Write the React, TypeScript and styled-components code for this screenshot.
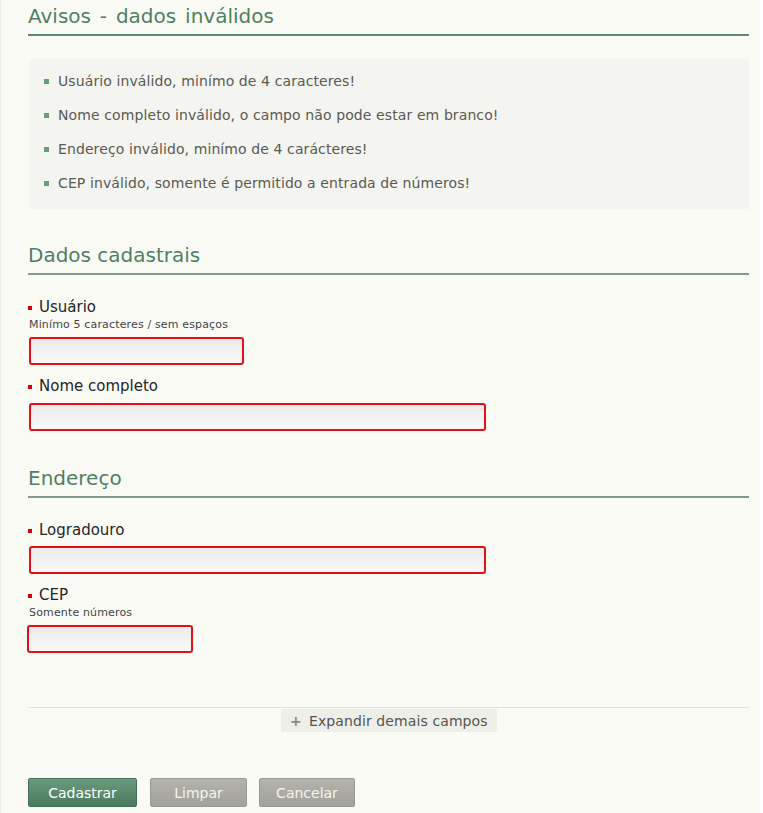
import React from "react";
import styled, { createGlobalStyle } from "styled-components";

const Global = createGlobalStyle`
  html, body { margin: 0; padding: 0; background: #ffffff; }
  body { font-family: "DejaVu Sans", Verdana, sans-serif; }
`;

const Page = styled.div`
  width: 760px;
  min-height: 813px;
  box-sizing: border-box;
  background: #fbfbf6;
  border-left: 1px solid #ecece6;
  padding: 4px 11px 6px 27px;
`;

const Heading = styled.h2<{ $strong?: boolean; $top: number }>`
  margin: ${(p) => p.$top}px 0 0 0;
  font-size: 20px;
  line-height: 24px;
  font-weight: normal;
  color: #4f7f63;
  word-spacing: ${(p) => (p.$strong ? "2.5px" : "0")};
  padding-bottom: 6px;
  border-bottom: 2px solid ${(p) => (p.$strong ? "#5f8b6d" : "#7f9e8a")};
`;

const WarnBox = styled.ul`
  list-style: none;
  margin: 23px 0 0 2px;
  padding: 5px 0 9px 14px;
  background: #f4f4f1;
`;

const WarnItem = styled.li`
  display: flex;
  align-items: center;
  height: 34px;
  font-size: 14px;
  letter-spacing: 0.1px;
  color: #5a5a52;
`;

const Bullet = styled.span`
  width: 5px;
  height: 5px;
  background: #6b9a78;
  margin-right: 9px;
  flex: none;
`;

const Field = styled.div<{ $top: number }>`
  display: flex;
  flex-direction: column;
  align-items: flex-start;
  margin-top: ${(p) => p.$top}px;
`;

const Label = styled.label`
  display: flex;
  align-items: center;
  font-size: 15px;
  line-height: 18px;
  color: #252525;
  margin-left: 1px;
`;

const Mark = styled.span`
  width: 4px;
  height: 4px;
  background: #dd0000;
  margin-right: 7px;
  margin-top: 2px;
  margin-left: -1px;
`;

const Hint = styled.div`
  font-size: 11px;
  line-height: 14px;
  letter-spacing: 0.15px;
  color: #444;
  margin: 2px 0 0 1px;
`;

const Input = styled.input<{ $w: number; $mt: number; $ml?: number }>`
  box-sizing: border-box;
  width: ${(p) => p.$w}px;
  height: 28px;
  margin: ${(p) => p.$mt}px 0 0 ${(p) => p.$ml ?? 1}px;
  border: 2px solid #e3101a;
  border-radius: 3px;
  background: linear-gradient(#ebebeb, #f9f9f9);
  outline: none;
  font-family: inherit;
`;

const ExpandRow = styled.div`
  margin-top: 54px;
  border-top: 1px solid #e2e2dc;
  padding-top: 1px;
  display: flex;
  justify-content: center;
`;

const ExpandButton = styled.button`
  display: flex;
  align-items: center;
  gap: 9px;
  height: 23px;
  width: 216px;
  padding: 0 0 0 9px;
  border: none;
  border-radius: 2px;
  background: #efefea;
  color: #555550;
  font-family: inherit;
  font-size: 14px;
  letter-spacing: 0.1px;
  margin-left: 1px;
`;

const Plus = styled.span`
  font-size: 14px;
  font-weight: bold;
  color: #8a8a84;
  width: 10px;
  text-align: center;
`;

const ButtonRow = styled.div`
  display: flex;
  margin-top: 46px;
  gap: 13px;
`;

const Btn = styled.button<{ $w: number; $primary?: boolean; $gap?: number }>`
  width: ${(p) => p.$w}px;
  height: 29px;
  margin-left: ${(p) => p.$gap ?? 0}px;
  border: 1px solid ${(p) => (p.$primary ? "#43705a" : "#9a9a92")};
  border-radius: 2px;
  background: ${(p) =>
    p.$primary
      ? "linear-gradient(#6a9a7c, #4b7b5e)"
      : "linear-gradient(#b4b3ab, #a3a29a)"};
  color: ${(p) => (p.$primary ? "#ffffff" : "#f4f4f0")};
  font-family: inherit;
  font-size: 14px;
  padding: 0;
`;

const warnings = [
  "Usuário inválido, minímo de 4 caracteres!",
  "Nome completo inválido, o campo não pode estar em branco!",
  "Endereço inválido, minímo de 4 carácteres!",
  "CEP inválido, somente é permitido a entrada de números!",
];

export default function App() {
  return (
    <>
      <Global />
      <Page>
        <Heading $strong $top={0}>Avisos - dados inválidos</Heading>
        <WarnBox>
          {warnings.map((w) => (
            <WarnItem key={w}>
              <Bullet />
              {w}
            </WarnItem>
          ))}
        </WarnBox>

        <Heading $top={34}>Dados cadastrais</Heading>
        <Field $top={23}>
          <Label><Mark />Usuário</Label>
          <Hint>Minímo 5 caracteres / sem espaços</Hint>
          <Input $w={215} $mt={5} />
        </Field>
        <Field $top={12}>
          <Label><Mark />Nome completo</Label>
          <Input $w={457} $mt={8} />
        </Field>

        <Heading $top={35}>Endereço</Heading>
        <Field $top={23}>
          <Label><Mark />Logradouro</Label>
          <Input $w={457} $mt={7} />
        </Field>
        <Field $top={12}>
          <Label><Mark />CEP</Label>
          <Hint>Somente números</Hint>
          <Input $w={166} $mt={5} $ml={-1} />
        </Field>

        <ExpandRow>
          <ExpandButton>
            <Plus>+</Plus>
            Expandir demais campos
          </ExpandButton>
        </ExpandRow>

        <ButtonRow>
          <Btn $primary $w={109}>Cadastrar</Btn>
          <Btn $w={97}>Limpar</Btn>
          <Btn $w={96} $gap={-1}>Cancelar</Btn>
        </ButtonRow>
      </Page>
    </>
  );
}
